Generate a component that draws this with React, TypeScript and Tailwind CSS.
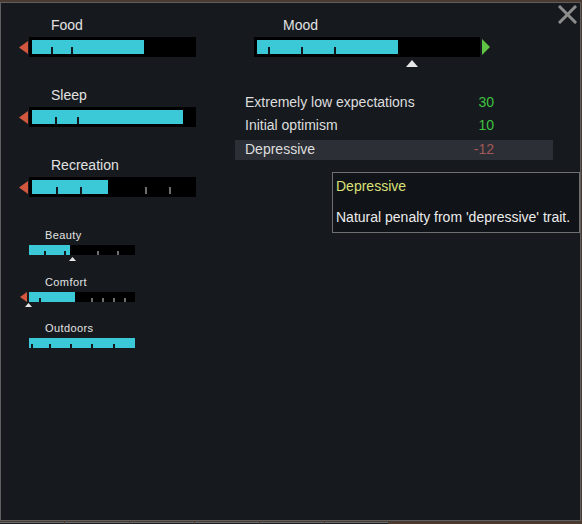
import React from "react";

type Tick = { x: number; gray?: boolean };

function Bar({
  className,
  fill,
  ticks,
  tickClass,
  fillClass,
  children,
}: {
  className: string;
  fill: number;
  ticks: Tick[];
  tickClass: string;
  fillClass: string;
  children?: React.ReactNode;
}) {
  return (
    <div className={"relative bg-black " + className}>
      <div className="relative h-full w-full">
        <div className={"h-full bg-[#3bc9d7] " + fillClass} style={{ width: fill }} />
        {ticks.map((t, i) => (
          <div
            key={i}
            className={
              "absolute bottom-0 w-[2px] " +
              tickClass +
              " " +
              (t.gray ? "bg-[#6f6f6f]" : "bg-[#14181c]")
            }
            style={{ left: t.x }}
          />
        ))}
      </div>
      {children}
    </div>
  );
}

function LeftTri({ w, h }: { w: number; h: number }) {
  return (
    <svg width={w} height={h} viewBox={`0 0 ${w} ${h}`}>
      <polygon points={`${w},0 0,${h / 2} ${w},${h}`} fill="#d2573f" />
    </svg>
  );
}

function UpTri({ w, h }: { w: number; h: number }) {
  return (
    <svg width={w} height={h} viewBox={`0 0 ${w} ${h}`} className="block">
      <polygon points={`0,${h} ${w / 2},0 ${w},${h}`} fill="#e6e6e6" />
    </svg>
  );
}

function BigNeed({
  label,
  fill,
  ticks,
}: {
  label: string;
  fill: number;
  ticks: Tick[];
}) {
  return (
    <div className="h-[70px]">
      <div className="h-[20px] pl-[32px] text-[14px] leading-[20px] text-[#e2e2e2]">{label}</div>
      <div className="mt-[2px] flex items-center">
        <div className="flex w-[10px] items-center">
          <LeftTri w={9} h={13} />
        </div>
        <Bar
          className="h-[20px] w-[167px] p-[3px]"
          fill={fill}
          ticks={ticks}
          tickClass="h-[7px]"
          fillClass=""
        />
      </div>
    </div>
  );
}

function SmallNeed({
  label,
  fill,
  ticks,
  tri,
  marker,
  markerGap,
  blockClass,
}: {
  label: string;
  fill: number;
  ticks: Tick[];
  tri?: boolean;
  marker?: number;
  markerGap?: string;
  blockClass: string;
}) {
  return (
    <div className={blockClass}>
      <div className="h-[14px] pl-[26px] text-[11px] leading-[14px] tracking-[0.4px] text-[#e2e2e2]">
        {label}
      </div>
      <div className="mt-[3px] flex items-center">
        <div className="flex w-[10px] items-center justify-start pl-[1px]">
          {tri ? <LeftTri w={7} h={10} /> : null}
        </div>
        <Bar
          className="h-[10px] w-[106px]"
          fill={fill}
          ticks={ticks}
          tickClass="h-[4px]"
          fillClass="h-[9px]"
        >
          {marker !== undefined ? (
            <div className={"absolute top-full " + (markerGap ?? "")} style={{ left: marker - 4 }}>
              <UpTri w={7} h={4} />
            </div>
          ) : null}
        </Bar>
      </div>
    </div>
  );
}

function ThoughtRow({
  label,
  value,
  color,
  highlight,
}: {
  label: string;
  value: string;
  color: string;
  highlight?: boolean;
}) {
  return (
    <div
      className={
        "flex items-center justify-between pl-[10px] pr-[59px] text-[14px] " +
        (highlight ? "mt-[4px] h-[20px] bg-[#2c3036] pb-[2px]" : "h-[23px]")
      }
    >
      <span className="text-[#dedede]">{label}</span>
      <span className={color}>{value}</span>
    </div>
  );
}

export default function App() {
  return (
    <div className="h-[524px] w-[582px] overflow-hidden bg-[#4a3a30] font-['Liberation_Sans',Arial,sans-serif]">
      <div className="relative mt-[2px] flex h-[519px] w-[581px] border border-[#5e5e5e] bg-[#161a1f]">
        {/* left column */}
        <div className="w-[253px] pl-[18px] pt-[12px]">
          <BigNeed label="Food" fill={112} ticks={[{ x: 19 }, { x: 39 }]} />
          <BigNeed label="Sleep" fill={151} ticks={[{ x: 23 }, { x: 45 }]} />
          <BigNeed
            label="Recreation"
            fill={76}
            ticks={[{ x: 24 }, { x: 48 }, { x: 113, gray: true }, { x: 137, gray: true }]}
          />
          <div className="mt-[3px]">
            <SmallNeed
              blockClass="h-[47px]"
              label="Beauty"
              fill={41}
              ticks={[{ x: 15 }, { x: 35 }, { x: 68, gray: true }, { x: 88, gray: true }]}
              marker={44}
              markerGap="mt-[2px]"
            />
            <SmallNeed
              blockClass="h-[46px]"
              label="Comfort"
              fill={46}
              tri
              ticks={[
                { x: 10 },
                { x: 62, gray: true },
                { x: 73, gray: true },
                { x: 84, gray: true },
                { x: 95, gray: true },
              ]}
              marker={0}
              markerGap="mt-[1px]"
            />
            <SmallNeed
              blockClass="h-[46px]"
              label="Outdoors"
              fill={106}
              ticks={[{ x: 2 }, { x: 20 }, { x: 41 }, { x: 62 }, { x: 84 }]}
            />
          </div>
        </div>

        {/* right column */}
        <div className="pt-[12px]">
          <div className="h-[20px] pl-[29px] text-[14px] leading-[20px] text-[#e2e2e2]">Mood</div>
          <div className="mt-[2px] flex items-center gap-[2px]">
            <Bar
              className="h-[20px] w-[226px] p-[3px]"
              fill={141}
              ticks={[{ x: 11 }, { x: 44 }, { x: 77 }]}
              tickClass="h-[7px]"
              fillClass=""
            >
              <div className="absolute left-[152px] top-[23px]">
                <UpTri w={12} h={7} />
              </div>
            </Bar>
            <svg width="8" height="16" viewBox="0 0 8 16">
              <polygon points="0,0 8,8 0,16" fill="#5fc443" />
            </svg>
          </div>

          <div className="ml-[-19px] mt-[34px] w-[318px]">
            <ThoughtRow label="Extremely low expectations" value="30" color="text-[#3ec23e]" />
            <ThoughtRow label="Initial optimism" value="10" color="text-[#3ec23e]" />
            <div className="-mt-[1px]">
              <ThoughtRow label="Depressive" value="-12" color="text-[#a45858]" highlight />
            </div>
          </div>
        </div>

        {/* close button */}
        <div className="absolute left-[557px] top-[2px]">
          <svg width="19" height="19" viewBox="0 0 19 19">
            <path d="M2 2 L17 17 M17 2 L2 17" stroke="#8d8d8d" strokeWidth="3" strokeLinecap="square" />
          </svg>
        </div>

        {/* tooltip */}
        <div className="absolute left-[331px] top-[169px] h-[61px] w-[248px] border border-[#707070] bg-[#101317] px-[3px] pt-[3px] text-[14px]">
          <div className="h-[20px] leading-[20px] text-[#dce07a]">Depressive</div>
          <div className="mt-[11px] h-[20px] whitespace-nowrap leading-[20px] text-[#ececec]">
            Natural penalty from 'depressive' trait.
          </div>
        </div>
      </div>

      {/* bottom tabs */}
      <div className="mt-[1px] flex gap-[1px]">
        <div className="h-[3px] w-[64px] border-t border-[#6b6b6b] bg-[#1b1e22]" />
        <div className="h-[3px] w-[64px] border-t border-[#6b6b6b] bg-[#1b1e22]" />
        <div className="h-[3px] w-[64px] border-t border-[#6b6b6b] bg-[#1b1e22]" />
        <div className="h-[3px] w-[64px] border-t border-[#6b6b6b] bg-[#1b1e22]" />
        <div className="h-[3px] w-[64px] border-t border-[#6b6b6b] bg-[#1b1e22]" />
        <div className="h-[3px] w-[63px] border-t border-[#6b6b6b] bg-[#1b1e22]" />
      </div>
    </div>
  );
}
